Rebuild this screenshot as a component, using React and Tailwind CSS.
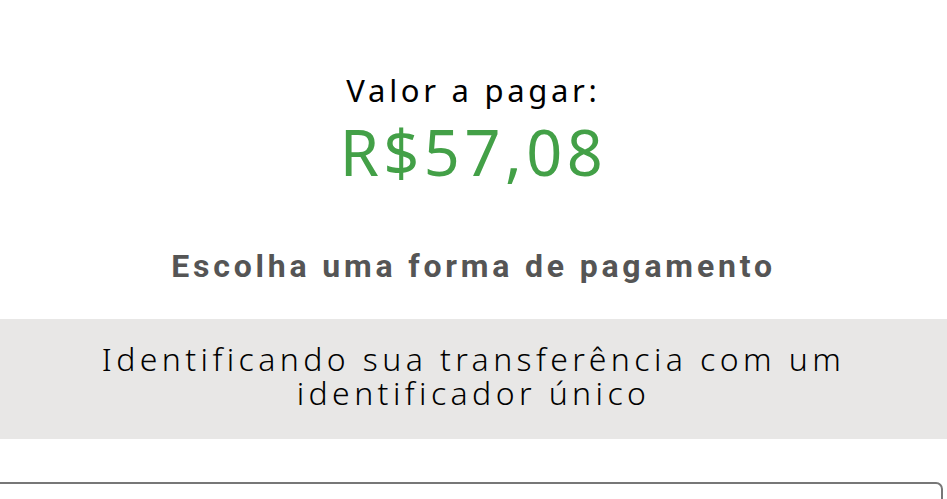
const App = () => {
  return (
    <div className="h-[499px] w-full overflow-hidden bg-white">
      <div className="flex flex-col items-center pt-[70px]">
        <p className="text-[31px] leading-[40px] tracking-[3.7px] text-black font-['Noto_Sans',sans-serif]">
          Valor a pagar:
        </p>
        <p className="mt-[6px] text-[63px] leading-[72px] tracking-[4.5px] text-[#43a047] font-['Noto_Sans',sans-serif]">
          R$57,08
        </p>
        <h2 className="mt-[58px] text-[32px] leading-[40px] font-bold tracking-[3.8px] text-[#555555] font-['Roboto',sans-serif]">
          Escolha uma forma de pagamento
        </h2>
      </div>
      <div className="mt-[33px] flex h-[120px] w-full items-center justify-center bg-[#e8e7e6] px-[60px] pb-[7px]">
        <p className="text-center text-[32px] font-light leading-[34px] tracking-[4.4px] text-black font-['Noto_Sans',sans-serif]">
          Identificando sua transferência com um identificador único
        </p>
      </div>
      <div className="mt-[43px] -ml-[10px] mr-[4px] h-[30px] rounded-[7px] border-2 border-[#777777]" />
    </div>
  );
};

export default App;
